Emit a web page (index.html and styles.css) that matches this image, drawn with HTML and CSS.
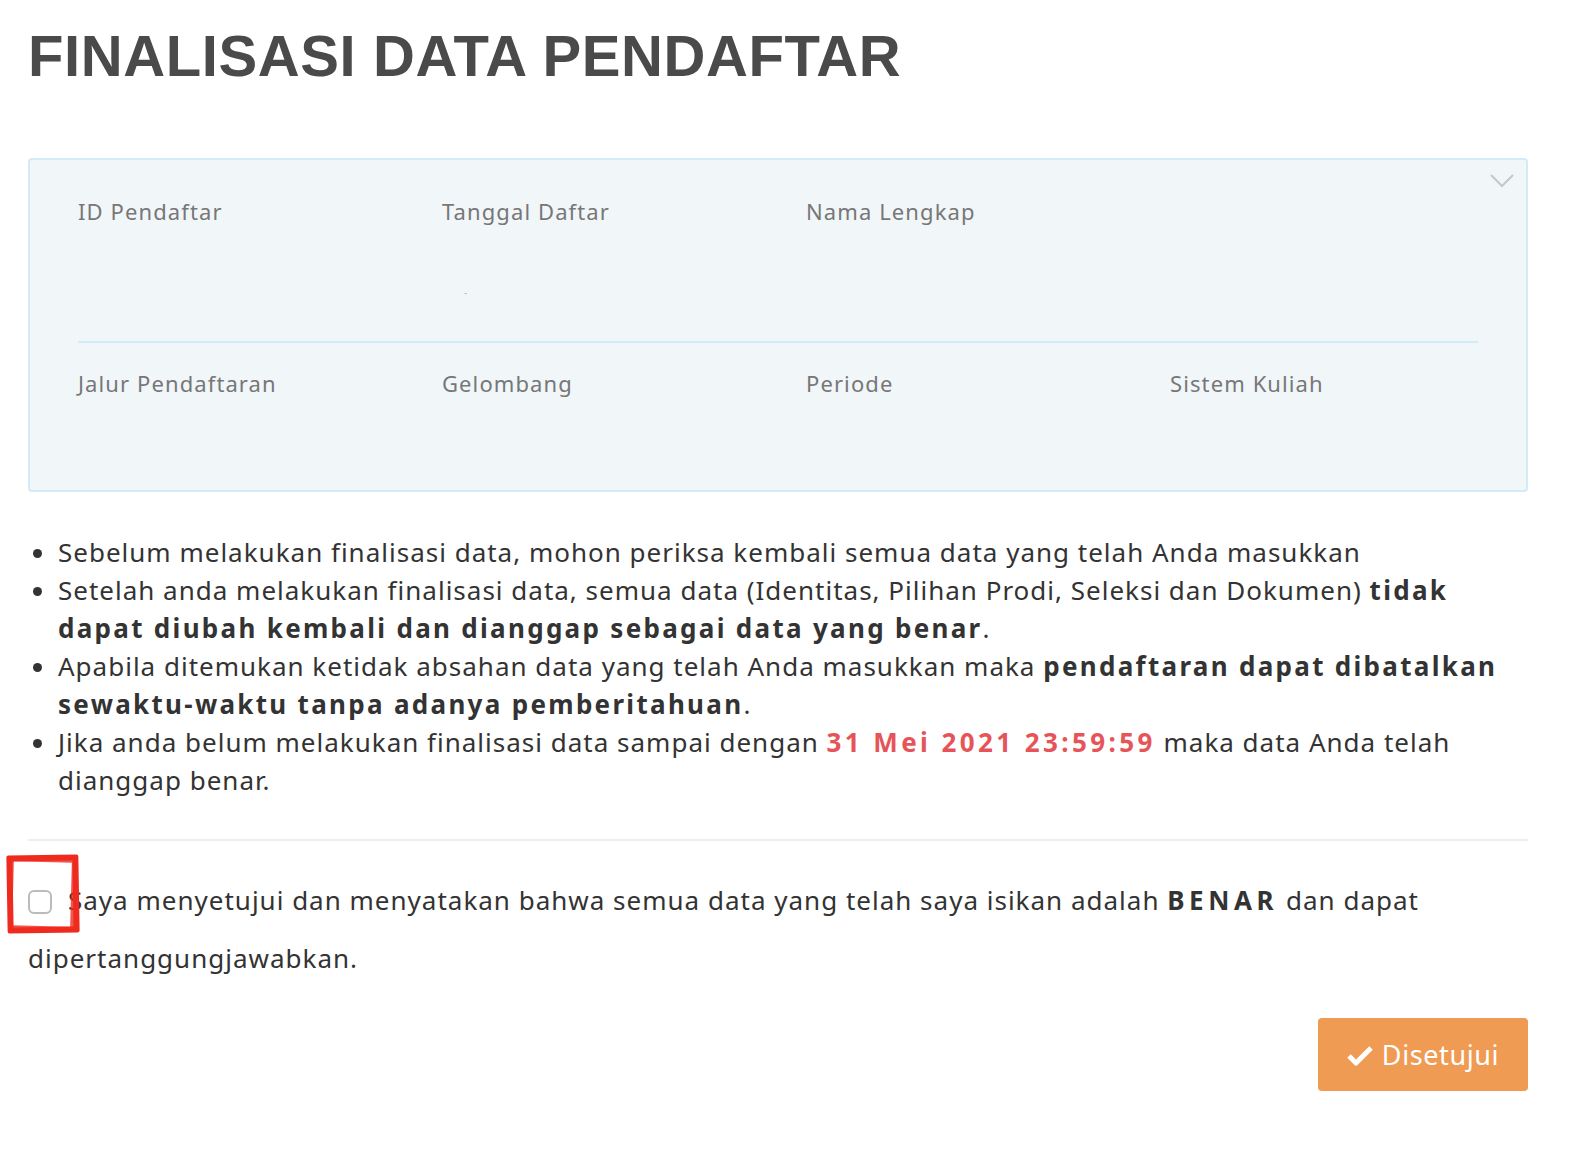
FILE: index.html
```html
<!DOCTYPE html>
<html>
<head>
<meta charset="utf-8">
<link rel="stylesheet" href="styles.css">
</head>
<body>
<div class="page">
  <h1 class="title">FINALISASI DATA PENDAFTAR</h1>
  <div class="card">
    <svg class="chev" width="24" height="14" viewBox="0 0 24 14"><path d="M1 1 L12 12 L23 1" fill="none" stroke="#c4c8cb" stroke-width="2"/></svg>
    <div class="row row-top">
      <div class="cell"><div class="lbl">ID Pendaftar</div></div>
      <div class="cell"><div class="lbl">Tanggal Daftar</div><div class="dash">-</div></div>
      <div class="cell"><div class="lbl">Nama Lengkap</div></div>
      <div class="cell"></div>
    </div>
    <div class="divider"></div>
    <div class="row row-bottom">
      <div class="cell"><div class="lbl">Jalur Pendaftaran</div></div>
      <div class="cell"><div class="lbl">Gelombang</div></div>
      <div class="cell"><div class="lbl">Periode</div></div>
      <div class="cell"><div class="lbl">Sistem Kuliah</div></div>
    </div>
  </div>
  <ul class="notes">
    <li>Sebelum melakukan finalisasi data, mohon periksa kembali semua data yang telah Anda masukkan</li>
    <li>Setelah anda melakukan finalisasi data, semua data (Identitas, Pilihan Prodi, Seleksi dan Dokumen) <b>tidak dapat diubah kembali dan dianggap sebagai data yang benar</b>.</li>
    <li>Apabila ditemukan ketidak absahan data yang telah Anda masukkan maka <b>pendaftaran dapat dibatalkan sewaktu-waktu tanpa adanya pemberitahuan</b>.</li>
    <li>Jika anda belum melakukan finalisasi data sampai dengan <b class="red">31 Mei 2021 23:59:59</b> maka data Anda telah dianggap benar.</li>
  </ul>
  <hr class="sep">
  <div class="agree">
    <span class="cbwrap"><span class="cb"></span><span class="mark"></span><span class="mark mark2"></span></span>Saya menyetujui dan menyatakan bahwa semua data yang telah saya isikan adalah <b>BENAR</b> dan dapat dipertanggungjawabkan.
  </div>
  <div class="actions">
    <button class="btn"><svg width="26" height="22" viewBox="0 0 26 22"><path d="M2 12 L9 19 L24 4" fill="none" stroke="#fff" stroke-width="5" stroke-linejoin="round"/></svg>Disetujui</button>
  </div>
</div>
</body>
</html>
```
FILE: styles.css
```css
html, body { margin: 0; padding: 0; background: #fff; }
body { font-family: "Noto Sans", "Open Sans", sans-serif; color: #333; }
.page { padding: 0 44px 0 28px; }
.title {
  margin: 0;
  padding-top: 26px;
  font-family: "Liberation Sans", Arial, sans-serif;
  font-weight: 700;
  font-size: 58px;
  line-height: 60px;
  color: #4a4a4a;
  letter-spacing: 0.6px;
}
.card {
  position: relative;
  margin-top: 72px;
  background: #f1f6f9;
  border: 2px solid #d3ebf8;
  border-radius: 4px;
  padding: 0 48px;
  box-sizing: border-box;
  height: 334px;
}
.chev { position: absolute; right: 12px; top: 14px; }
.row { display: grid; grid-template-columns: 364px 364px 364px 1fr; }
.row-top { height: 181px; padding-top: 35px; box-sizing: border-box; }
.row-bottom { padding-top: 24px; }
.lbl { font-size: 22px; line-height: 32px; color: #777; letter-spacing: 1.1px; }
.cell { position: relative; }
.dash { position: absolute; left: 22px; top: 90px; font-size: 10px; color: #bbb; }
.divider { height: 2px; background: #d3ebf8; }
.notes {
  margin: 41px 0 0 0;
  padding-left: 30px;
  font-size: 26px;
  line-height: 38px;
  letter-spacing: 1px;
  color: #333;
}
.notes b { font-weight: 700; letter-spacing: 2.3px; }
.notes b.red { color: #e65459; letter-spacing: 3.4px; }
.sep { border: 0; border-top: 2px solid #eee; margin: 40px 0 0 0; }
.agree {
  margin-top: 30px;
  font-size: 26px;
  line-height: 58px;
  letter-spacing: 1px;
  color: #333;
}
.agree b { letter-spacing: 4.6px; }
.cbwrap { position: relative; display: inline-block; width: 24px; height: 24px; margin-right: 16px; vertical-align: -4px; }
.cb { display: block; width: 20px; height: 20px; border: 2px solid #bbb; border-radius: 6px; background: #fff; }
.mark {
  position: absolute; left: -21px; top: -35px; width: 60px; height: 66px;
  border: 6px solid #ef2b1e; border-radius: 2px;
  transform: rotate(-1deg);
}
.mark2 { left: -19px; top: -32px; width: 58px; height: 64px; border-width: 4px; transform: rotate(1.5deg); opacity: 0.8; }
.actions { display: flex; justify-content: flex-end; margin-top: 31px; }
.btn {
  display: flex; align-items: center; gap: 9px;
  background: #f09b53; color: #fff; border: 0; border-radius: 4px;
  width: 210px; height: 73px; justify-content: center;
  font-family: "Noto Sans", "Open Sans", sans-serif; font-size: 27px; letter-spacing: 0.6px;
}
```
